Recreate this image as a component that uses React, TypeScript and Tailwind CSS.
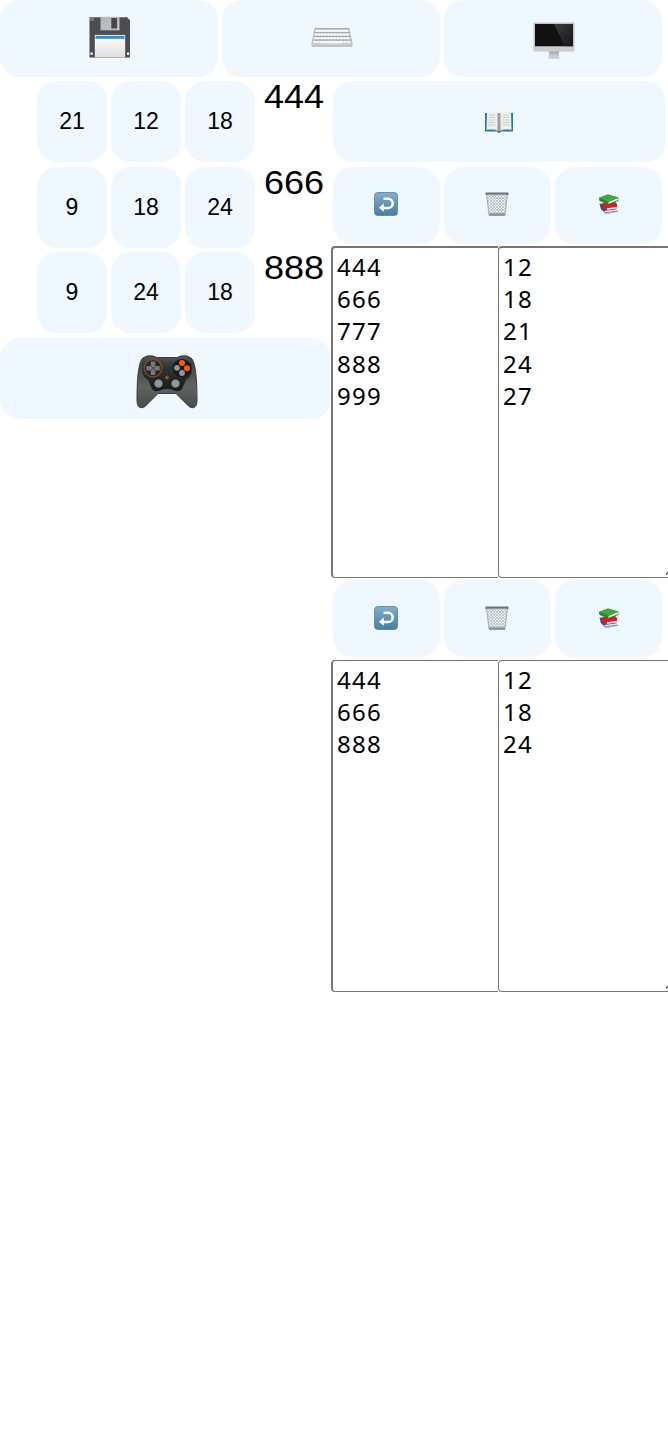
import type { ReactNode } from "react";

function Floppy() {
  return (
    <svg width="42" height="42" viewBox="0 0 42 42" aria-hidden="true">
      <defs>
        <linearGradient id="fl-shutter" x1="0" y1="0" x2="1" y2="1">
          <stop offset="0" stopColor="#b0b4b6" />
          <stop offset="1" stopColor="#c3c7c9" />
        </linearGradient>
        <linearGradient id="fl-label" x1="0" y1="0" x2="0" y2="1">
          <stop offset="0" stopColor="#ffffff" />
          <stop offset="1" stopColor="#dededf" />
        </linearGradient>
      </defs>
      <path d="M.5 1h37.200l3.300 3.300V41.500H.5z" fill="#4d4d4f" />
      <path d="M1 1.500h36.500" stroke="#77797a" strokeWidth="1" />
      <rect x="11.500" y=".8" width="19" height="13.500" fill="url(#fl-shutter)" />
      <rect x="22.300" y="2" width="5.800" height="10.500" fill="#47484b" />
      <rect x="1" y="2" width="4" height="3" fill="#777" />
      <path d="M5 41.500V20q0-1.500 1.500-1.500h29Q37 18.500 37 20v21.500z" fill="#6a6b6d" />
      <rect x="6" y="19" width="30" height="22.500" fill="url(#fl-label)" />
      <rect x="6.500" y="19.800" width="29" height="3" fill="#2991db" />
      <rect x="1.500" y="36.500" width="2.200" height="2.300" fill="#fff" />
      <rect x="38" y="36.500" width="2.200" height="2.300" fill="#fff" />
    </svg>
  );
}

function Keyboard() {
  const rows = [0, 1, 2, 3];
  const cols = [0, 1, 2, 3, 4, 5, 6, 7, 8, 9, 10];
  return (
    <svg width="42" height="22" viewBox="0 0 42 22" aria-hidden="true">
      <path d="M4 1.500h34l3 15.500v2.200H1V17z" fill="#dadcdd" stroke="#aaaeb0" strokeWidth=".8" />
      {rows.map((r) => (
        <g key={r}>
          <path d={`M${4 - r * 0.7} ${2.1 + r * 3.7}h${34 + r * 1.4}`} stroke="#949698" strokeWidth=".8" />
          {cols.map((c) => (
            <rect key={c} x={4.5 - r * 0.7 + c * (3 + r * 0.13)} y={2.8 + r * 3.7} width="2.300" height="2.300" fill="#fff" />
          ))}
          <path d={`M${4 - r * 0.7} ${5.4 + r * 3.7}h${34 + r * 1.4}`} stroke="#b0b2b4" strokeWidth=".6" />
        </g>
      ))}
      <rect x="10" y="14" width="20" height="2.400" fill="#f7f7f7" />
      <path d="M1 17.700h40v1.500H1z" fill="#b9bbbd" />
    </svg>
  );
}

function Monitor() {
  return (
    <svg width="42" height="38" viewBox="0 0 42 38" aria-hidden="true">
      <defs>
        <linearGradient id="mon-stand" x1="0" y1="0" x2="0" y2="1">
          <stop offset="0" stopColor="#a4a6a9" />
          <stop offset="1" stopColor="#d9dadc" />
        </linearGradient>
        <linearGradient id="mon-glare" x1="0" y1="0" x2="1" y2="1">
          <stop offset="0" stopColor="#3c3c3f" />
          <stop offset="1" stopColor="#161617" />
        </linearGradient>
      </defs>
      <rect x="16" y="29" width="10" height="7" fill="url(#mon-stand)" />
      <path d="M15.500 35.500h11v1h-11z" fill="#b9bbbd" />
      <rect x=".5" y=".5" width="41" height="29" rx="1" fill="#c1c3c6" />
      <rect x="2" y="2" width="38" height="22.500" fill="#111112" />
      <path d="M21 2h19v22.500h-8z" fill="url(#mon-glare)" />
      <path d="M1 24.500h40v4.500H1z" fill="#cbcdd0" />
    </svg>
  );
}

function OpenBook() {
  return (
    <svg width="28" height="22" viewBox="0 0 28 22" aria-hidden="true">
      <path d="M0 2h28v18.500H16l-2 1.300-2-1.300H0z" fill="#1581a8" />
      <path d="M2 1q7-1.700 11.500.8V20Q8 17.800 1.500 19z" fill="#f1f0ef" />
      <path d="M26 1q-7-1.700-11.500.8V20q5.500-2.200 12-1z" fill="#f1f0ef" />
      <path d="M12 1.500 14 3l2-1.500V19l-2 1-2-1z" fill="#c6c3c1" />
      <path d="M14 2v18" stroke="#747171" strokeWidth=".9" />
      <path d="M3.800 4h6.500M3.700 6.500h6.700M3.500 9h7M3.300 11.500h7M3 14h7.500M17.500 4H24M17.500 6.500h6.700M17.500 9h7M17.500 11.500h7M17.500 14H25" stroke="#cac7c7" strokeWidth=".9" />
      <path d="M2 18.700q6-1.200 11.500 1M26 18.700q-6-1.200-11.500 1" stroke="#aaa7a5" strokeWidth=".7" fill="none" />
      <path d="M12 20h4l-1 1.700h-2z" fill="#806a2e" />
    </svg>
  );
}

function ReturnArrow() {
  return (
    <svg width="24" height="24" viewBox="0 0 24 24" aria-hidden="true">
      <defs>
        <linearGradient id="return-bg" x1="0" y1="0" x2="0" y2="1">
          <stop offset="0" stopColor="#86aeca" />
          <stop offset="1" stopColor="#477da2" />
        </linearGradient>
      </defs>
      <rect x=".5" y=".5" width="23" height="23" rx="3.500" fill="url(#return-bg)" stroke="#537f9e" strokeWidth=".8" />
      <path d="M9.500 6.800h4.600a4.600 4.600 0 0 1 0 9.200H9" fill="none" stroke="#fff" strokeWidth="2.500" />
      <path d="m4.800 15.700 5-4.100v8.200z" fill="#fff" />
    </svg>
  );
}

function Basket() {
  return (
    <svg width="24" height="24" viewBox="0 0 24 24" aria-hidden="true">
      <defs>
        <pattern id="mesh" width="3" height="3" patternUnits="userSpaceOnUse">
          <path d="m0 0 3 3M3 0 0 3" stroke="#a8b0b6" strokeWidth=".65" />
        </pattern>
      </defs>
      <path d="m1.500 2 2.500 21h16l2.500-21z" fill="#edf1f3" />
      <path d="m1.500 2 2.500 21h16l2.500-21z" fill="url(#mesh)" stroke="#929da5" strokeWidth=".8" />
      <path d="M4 20.700h16l-.4 2.600H4.400z" fill="#9eacb7" />
      <path d="M4 23h16" stroke="#6d7881" />
      <rect x=".5" y=".6" width="23" height="2.400" rx=".5" fill="#69747d" />
      <path d="M2 2.800h20" stroke="#b4c0c8" strokeWidth=".7" />
    </svg>
  );
}

function BookStack() {
  return (
    <svg width="20" height="21" viewBox="0 0 20 21" aria-hidden="true">
      <path d="m.5 9.500 12 1 6.500 7-12 2.700L1.800 15z" fill="#3c4f9c" />
      <path d="m5 17 13-1.800.4 2.500-11.600 2.200z" fill="#e7e9ef" />
      <path d="m6 18.700 12.400-1.500" stroke="#6270a6" strokeWidth=".8" />
      <path d="M3 9.300 16 8l2 2v4.500l-11 1.700-4-2.700z" fill="#df1a20" />
      <path d="m8 14.200 9.800-1.500v1.800L8 16z" fill="#f0e0dd" />
      <path d="M.2 3.800 9 .5l10.500 3v3L9.500 10.600.7 6.500z" fill="#208c2c" />
      <path d="M.4 3.800 9 .6l10.200 3L9.200 7.700z" fill="#43a840" />
      <path d="m9.500 8 9.700-3.900v2.200l-9.600 3.700z" fill="#e7f0e3" />
      <path d="M.6 4v2.500l8.800 4 9.800-3.900" fill="none" stroke="#25862e" strokeWidth=".8" />
    </svg>
  );
}

function Gamepad() {
  return (
    <svg width="62" height="54" viewBox="0 0 62 54" aria-hidden="true">
      <defs>
        <linearGradient id="pad-body" x1="0" y1="0" x2="0" y2="1">
          <stop offset="0" stopColor="#393e3e" />
          <stop offset=".6" stopColor="#606260" />
          <stop offset="1" stopColor="#484b48" />
        </linearGradient>
        <linearGradient id="pad-face" x1="0" y1="0" x2="0" y2="1">
          <stop offset="0" stopColor="#505858" />
          <stop offset=".3" stopColor="#303535" />
          <stop offset="1" stopColor="#171b1b" />
        </linearGradient>
        <radialGradient id="pad-stick">
          <stop offset="0" stopColor="#aaadad" />
          <stop offset="1" stopColor="#747c7d" />
        </radialGradient>
      </defs>
      <path d="M7 3Q11-.3 17 1l4 1.500h20L45 1q6-1.300 10 2c5 4 6 24 6 42 0 8-4 9-8 6.500L40 38.500H22L9 51.500C5 54 1 53 1 45 1 27 2 7 7 3z" fill="url(#pad-body)" stroke="#343c3b" strokeWidth="1" />
      <path d="M6 5Q11 0 18 2l4 1h18l4-1q7-2 12 3v12q-1 5-6 8l-4 9q-3 4-9 1l-4-1h-4l-4 1q-6 3-9-1l-4-9q-5-3-6-8z" fill="url(#pad-face)" />
      <circle cx="17" cy="13.200" r="8.700" fill="#242727" stroke="#93451e" strokeWidth="1.300" />
      <path d="M14.700 6.500h4.600v4.400h4.400v4.600h-4.400V20h-4.600v-4.500h-4.400v-4.600h4.400z" fill="#737978" />
      <path d="m15 11 4.500 4.500m0-4.500L15 15.500" stroke="#343837" strokeWidth=".8" />
      <circle cx="46" cy="13.200" r="9.300" fill="#151a1b" />
      <circle cx="46" cy="8" r="3" fill="#ff5c10" />
      <circle cx="51" cy="13.200" r="3" fill="#ff530b" />
      <circle cx="41" cy="12.800" r="2.900" fill="#929898" />
      <circle cx="46" cy="18" r="2.900" fill="#8e9595" />
      <circle cx="31" cy="22.500" r="2" fill="#944317" />
      <circle cx="31" cy="22.500" r=".8" fill="#d1652c" />
      <g stroke="#171c1c" strokeWidth="1.300">
        <circle cx="22.500" cy="28.500" r="5" fill="url(#pad-stick)" />
        <circle cx="39.500" cy="28.500" r="5" fill="url(#pad-stick)" />
      </g>
      <circle cx="22.500" cy="28.500" r="3" fill="#929797" />
      <circle cx="39.500" cy="28.500" r="3" fill="#929797" />
      <path d="M25 36.500h12" stroke="#5c6260" strokeWidth="1.500" />
    </svg>
  );
}

function Tile({ label, className, children }: { label?: string; className: string; children: ReactNode }) {
  return (
    <button type="button" aria-label={label} className={`flex shrink-0 items-center justify-center rounded-[20px] bg-[#f0f8ff] ${className}`}>
      {children}
    </button>
  );
}

function Toolbar({ tile }: { tile: string }) {
  return (
    <div className="flex gap-1 pl-[2px]">
      <Tile label="Undo" className={`w-[107px] pr-px ${tile}`}><ReturnArrow /></Tile>
      <Tile label="Clear" className={`w-[107px] pr-px ${tile}`}><Basket /></Tile>
      <Tile label="Library" className={`w-[107px] ${tile}`}><BookStack /></Tile>
    </div>
  );
}

function Lists({ left, right, className, column }: { left: string[]; right: string[]; className: string; column: string }) {
  return (
    <div className={`flex w-[345px] font-['Noto_Sans',sans-serif] text-[24px] leading-[32.2px] tracking-[1.3px] ${className}`}>
      <div className={`w-[167px] rounded-l-[4px] border-b border-l-2 border-[#767676] pl-[4px] ${column}`}>
        {left.map((n) => <p key={n}>{n}</p>)}
      </div>
      <div className={`relative w-[178px] rounded-l-[4px] border-b border-l border-[#767676] pl-[4px] ${column}`}>
        {right.map((n) => <p key={n}>{n}</p>)}
        <svg className="absolute bottom-px left-[167px]" width="9" height="9" viewBox="0 0 9 9" aria-hidden="true">
          <path d="M0 7.500 7.500 0M4 7.500 7.500 4" stroke="#444" strokeWidth="1.500" />
        </svg>
      </div>
    </div>
  );
}

const rows = [
  { keys: [21, 12, 18], total: "444", height: "h-[86px]" },
  { keys: [9, 18, 24], total: "666", height: "h-[85px]" },
  { keys: [9, 24, 18], total: "888", height: "h-[86px]" },
];

export default function App() {
  return (
    <main className="h-[1452px] w-[668px] overflow-hidden bg-white font-['Liberation_Sans',Arial,sans-serif] text-black">
      <div className="flex h-[81px] gap-1">
        <Tile label="Save" className="h-[77px] w-[218px] pb-[3px] pl-[2px]"><Floppy /></Tile>
        <Tile label="Keyboard" className="h-[77px] w-[218px] pb-[2px] pl-px"><Keyboard /></Tile>
        <Tile label="Display" className="h-[77px] w-[218px] pt-[4px] pl-[2px]"><Monitor /></Tile>
      </div>
      <div className="flex">
        <section className="w-[331px] shrink-0">
          {rows.map((row) => (
            <div key={row.total} className={`flex gap-1 pl-[37px] ${row.height}`}>
              {row.keys.map((key, i) => (
                <Tile key={i} className="h-[81px] w-[70px] text-[23px]">{key}</Tile>
              ))}
              <span className="ml-[5px] origin-left scale-x-[1.06] self-start text-[34px] leading-[31px]">{row.total}</span>
            </div>
          ))}
          <Tile label="Play" className="h-[81px] w-[331px] pt-[7px] pl-[2px]"><Gamepad /></Tile>
        </section>
        <section className="w-[337px] shrink-0 overflow-hidden">
          <div className="flex h-[86px] pl-[2px]">
            <Tile label="Read" className="h-[81px] w-[333px] pr-[2px]"><OpenBook /></Tile>
          </div>
          <Toolbar tile="h-[77px] pb-[3px]" />
          <Lists className="mt-[2px] mb-[2px] h-[332px]" column="border-t-2 pt-[3px]" left={["444", "666", "777", "888", "999"]} right={["12", "18", "21", "24", "27"]} />
          <Toolbar tile="h-[77px] pb-px" />
          <Lists className="mt-[3px] h-[332px]" column="border-t pt-[3px]" left={["444", "666", "888"]} right={["12", "18", "24"]} />
        </section>
      </div>
    </main>
  );
}
